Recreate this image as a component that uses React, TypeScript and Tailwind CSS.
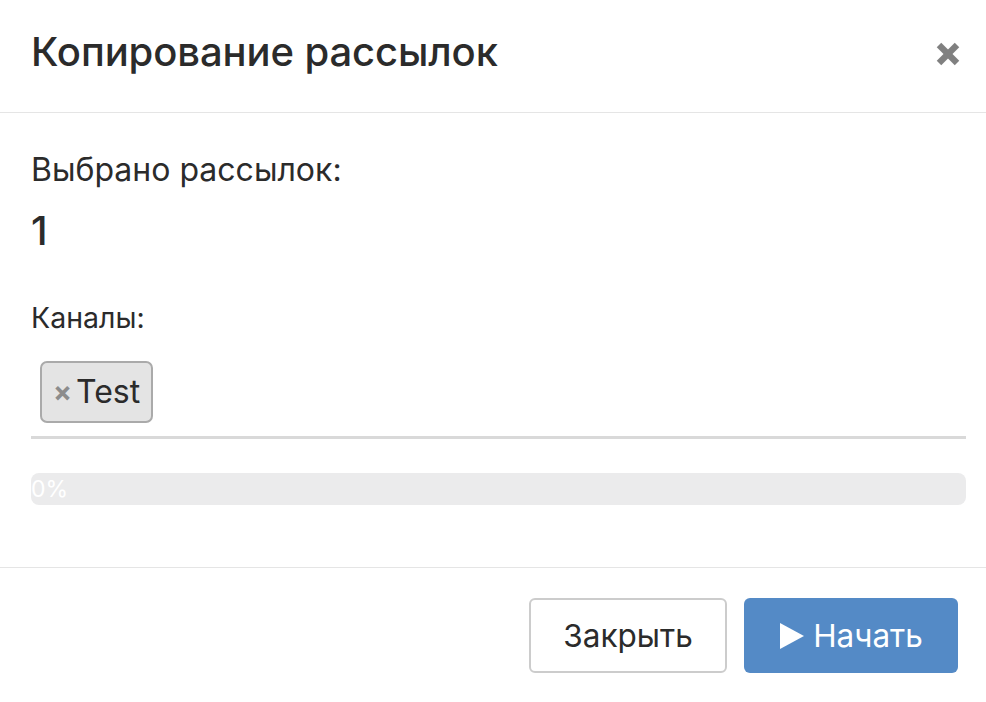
import { X } from "lucide-react";

export default function App() {
    return (
        <div className="w-[986px] h-[702px] bg-white text-[#2b2b2b] font-['Inter',sans-serif] flex flex-col">
            {/* Заголовок */}
            <div className="h-[113px] flex items-center justify-between pl-[31px] pr-[20px] pb-[8px] border-b border-[#e5e5e5] shrink-0">
                <h1 className="text-[40px] leading-[48px] font-medium tracking-[-0.1px]">Копирование рассылок</h1>
                <X className="w-[36px] h-[36px] text-[#808080] mt-[4px]" strokeWidth={4.2} strokeLinecap="butt" />
            </div>

            {/* Тело */}
            <div className="flex-1 pl-[31px] pr-[20px] pt-[38px] flex flex-col">
                <p className="text-[32px] leading-[38px]">Выбрано рассылок:</p>
                <p className="text-[40px] leading-[44px] font-medium mt-[20px]">1</p>

                <p className="text-[28.5px] leading-[32px] mt-[49px]">Каналы:</p>

                <div className="mt-[27px] pl-[9px] pb-[13px] border-b-[3px] border-[#d9d9d9] flex">
                    <span className="flex items-center gap-[4px] h-[62px] pl-[11px] pr-[11px] bg-[#e4e4e4] border-2 border-[#aaaaaa] rounded-[7px] text-[32px]">
                        <span className="text-[#8c8c8c] text-[28px] font-bold leading-none">×</span>
                        Test
                    </span>
                </div>

                <div className="mt-[34px] h-[32px] rounded-[8px] bg-[#ebebec] flex items-center">
                    <span className="text-white text-[23px] leading-none">0%</span>
                </div>
            </div>

            {/* Футер */}
            <div className="h-[135px] border-t border-[#e5e5e5] flex justify-end items-start gap-[17px] pt-[30px] pr-[28px] shrink-0">
                <button className="w-[198px] h-[75px] border-2 border-[#cccccc] rounded-[6px] bg-white text-[31.5px] text-[#2b2b2b]">
                    Закрыть
                </button>
                <button className="w-[214px] h-[75px] rounded-[6px] bg-[#548ac6] text-white text-[31.5px] flex items-center justify-center gap-[8px]">
                    <svg width="26" height="28" viewBox="0 0 26 28">
                        <path d="M1 1 L25 14 L1 27 Z" fill="white" />
                    </svg>
                    Начать
                </button>
            </div>
        </div>
    );
}
